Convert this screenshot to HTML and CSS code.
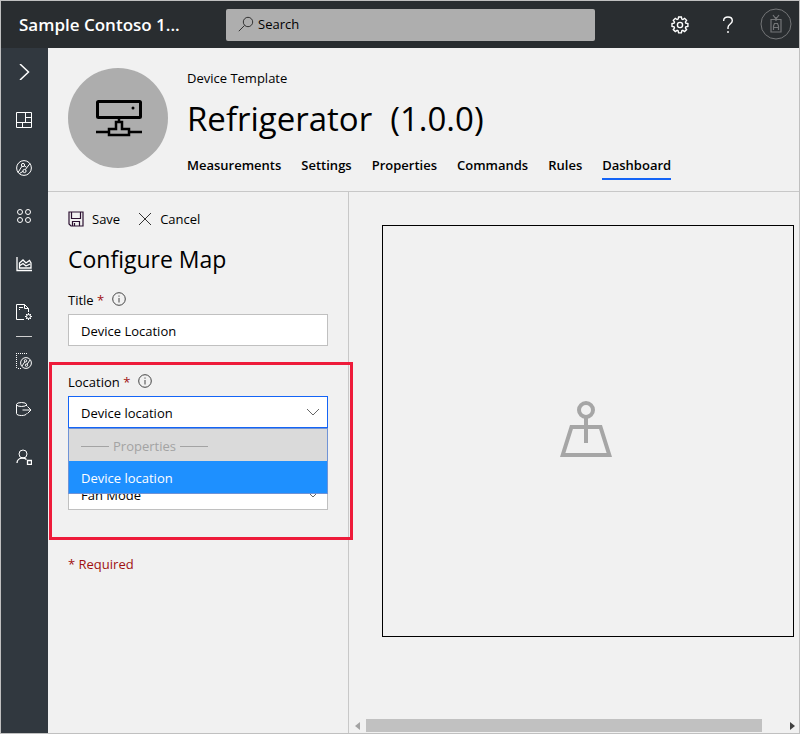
FILE: index.html
```html
<!DOCTYPE html>
<html lang="en">
<head>
<meta charset="utf-8">
<meta name="viewport" content="width=device-width, initial-scale=1">
<title>Refrigerator (1.0.0)</title>
<link rel="stylesheet" href="styles.css">
</head>
<body>
<header class="topbar">
  <div class="brand">Sample Contoso 1...</div>
  <label class="search">
    <svg width="16" height="16" viewBox="0 0 16 16" fill="none" stroke="#333"><circle cx="10" cy="6" r="4.7"/><path d="M6.6 9.4L.8 15.2"/></svg>
    <input type="search" placeholder="Search" aria-label="Search">
  </label>
  <div class="tools">
    <button class="tool" aria-label="Settings">
      <svg width="18" height="18" viewBox="0 0 18 18" fill="none" stroke="#fff" stroke-width="1.4"><path d="M7.6 1h2.8l.4 2.1 1 .4 1.8-1.2 2 2-1.2 1.8.4 1 2.1.5v2.8l-2.1.4-.4 1 1.2 1.8-2 2-1.8-1.2-1 .4-.4 2.1H7.6l-.5-2.1-1-.4-1.8 1.2-2-2 1.2-1.8-.4-1L1 10.400V7.600l2.100-.5.4-1-1.200-1.800 2-2 1.800 1.200 1-.4z"/><circle cx="9" cy="9" r="2.600"/></svg>
    </button>
    <button class="tool" aria-label="Help">
      <svg width="12" height="18" viewBox="0 0 12 18" fill="none" stroke="#fff" stroke-width="1.4"><path d="M1.700 5V4.200C1.700 2.200 3.400 1 5.900 1s4.400 1.400 4.400 3.700C10.300 8 6 8 6 11.500V13M6 15v2"/></svg>
    </button>
    <button class="avatar" aria-label="Account">
      <svg width="32" height="32" viewBox="0 0 32 32" fill="none" stroke="#747678"><circle cx="16" cy="16" r="15"/><path d="M11 11.500h10v12.500H11zM13 7l3 4 3-4M16 9v4" stroke-width="1.200"/><path d="M13.500 22v-4l1-2.500h3l1 2.500v4M13.500 19.500h5" stroke-width="1.200"/></svg>
    </button>
  </div>
</header>
<div class="shell">
  <nav class="rail" aria-label="Main">
    <button class="rail-item" aria-label="Expand"><svg width="16" height="16" viewBox="0 0 16 16"><path d="M4 0l8.500 8L4 16"/></svg></button>
    <a class="rail-item" href="#" aria-label="Dashboard"><svg width="16" height="16" viewBox="0 0 16 16"><path d="M.5.500h15v15H.500zM.500 10.500h15M9.500.500v10M9.500 5.500h6M6.500 10.500v5"/></svg></a>
    <a class="rail-item" href="#" aria-label="Explorer"><svg width="16" height="16" viewBox="0 0 16 16"><circle cx="8" cy="8" r="7.400"/><circle cx="7" cy="5" r="1.600"/><circle cx="8.500" cy="11" r="1.600"/><path d="M2 12.500L6 6.200M9.300 9.600L14 3.500M3.500 13.500l3.600-2.200M8.300 5.800l2.200 1.500"/></svg></a>
    <a class="rail-item" href="#" aria-label="Device sets"><svg width="16" height="16" viewBox="0 0 16 16"><circle cx="4" cy="4" r="2.500"/><circle cx="12" cy="4" r="2.500"/><circle cx="4" cy="12" r="2.500"/><circle cx="12" cy="12" r="2.500"/></svg></a>
    <a class="rail-item" href="#" aria-label="Analytics"><svg width="16" height="16" viewBox="0 0 16 16"><path d="M1 1v13.500h15M3.500 12V7L7 4l3 3 3.500-2.500L15 7v5zM4 9.500l3-2 3 2.500 4-2" stroke-width="1.300"/></svg></a>
    <a class="rail-item" href="#" aria-label="Jobs"><svg width="16" height="16" viewBox="0 0 16 16"><path d="M8 15.500H.500V.500h8l4 4V8M8.500.500v4h4M3 3.500h4M3 5.500h1" /><circle cx="12.500" cy="12.500" r="2"/><path d="M12.500 9v1.500M12.500 14.500V16M9 12.500h1.500M14.500 12.500H16M10 10l1 1M14 14l1 1M15 10l-1 1M11 14l-1 1"/></svg></a>
    <div class="rail-divider"></div>
    <a class="rail-item" href="#" aria-label="Device templates"><svg width="16" height="16" viewBox="0 0 16 16"><path d="M0 .500h12M.500 2v14M2 15.500h3" stroke-dasharray="1 1"/><circle cx="10" cy="10" r="5.400"/><circle cx="9.500" cy="7.800" r="1.200"/><circle cx="10.500" cy="12.200" r="1.200"/><path d="M6 13l3-4.400M14 7l-3 4.400"/></svg></a>
    <a class="rail-item" href="#" aria-label="Data export"><svg width="16" height="16" viewBox="0 0 16 16"><ellipse cx="5.500" cy="3.500" rx="5" ry="2"/><path d="M.500 3.500v9c0 2.700 10 2.700 10 0M10.500 3.500V5M6.500 9h8.500M11.500 5.500L15 9l-3.500 3.500"/></svg></a>
    <a class="rail-item" href="#" aria-label="Administration"><svg width="16" height="16" viewBox="0 0 16 16"><circle cx="7" cy="5" r="4"/><path d="M1 14c0-3 2.500-5 5.500-5 1.500 0 3 .5 4 1.500M11.500 11.500h4v4h-4z" stroke-width="1.300"/></svg></a>
  </nav>
  <main class="main">
    <section class="hero">
      <div class="hero-icon">
        <svg width="46" height="38" viewBox="0 0 46 38" fill="none" stroke="#000" stroke-width="3"><rect x="1.500" y="2.500" width="43" height="16" rx="1"/><path d="M0 33h13M33 33h13M23 19v4M20 30v-7h6v7h7v6H13v-6z" stroke-width="2.500"/><circle cx="37" cy="9" r="1.500" fill="#000" stroke="none"/></svg>
      </div>
      <div class="hero-text">
        <div class="kind">Device Template</div>
        <h1><span>Refrigerator</span> <span>(1.0.0)</span></h1>
        <nav class="tabs" aria-label="Template">
          <a href="#">Measurements</a>
          <a href="#">Settings</a>
          <a href="#">Properties</a>
          <a href="#">Commands</a>
          <a href="#">Rules</a>
          <a href="#" class="active" aria-current="page">Dashboard</a>
        </nav>
      </div>
    </section>
    <div class="workspace">
      <form class="panel">
        <div class="actions">
          <button type="button"><svg width="16" height="16" viewBox="0 0 16 16" fill="none" stroke="#2b1030" stroke-width="1.200"><path d="M1 1h14v14H3l-2-2zM3.500 1v6.500h9V1M4.500 15v-4.500h7V15M6.500 12v3"/></svg>Save</button>
          <button type="button"><svg width="14" height="14" viewBox="0 0 14 14" fill="none" stroke="#333"><path d="M1 1l12 12M13 1L1 13"/></svg>Cancel</button>
        </div>
        <h2>Configure Map</h2>
        <div class="field">
          <div class="label-row">
            <label for="title">Title <span class="star">*</span></label>
            <svg class="info" width="14" height="14" viewBox="0 0 14 14"><circle cx="7" cy="7" r="6.300"/><path d="M7 6v4.500M7 3.500v1.200"/></svg>
          </div>
          <input class="box" id="title" type="text" value="Device Location">
        </div>
        <div class="field highlight">
          <div class="label-row">
            <label for="location">Location <span class="star">*</span></label>
            <svg class="info" width="14" height="14" viewBox="0 0 14 14"><circle cx="7" cy="7" r="6.300"/><path d="M7 6v4.500M7 3.500v1.200"/></svg>
          </div>
          <div class="picker">
            <select class="box open" id="location"><option>Device location</option></select>
            <svg class="chevron" width="12" height="8" viewBox="0 0 12 8"><path d="M0 1l6 6 6-6"/></svg>
            <ul class="menu">
              <li class="group"><span class="dash"></span>Properties<span class="dash"></span></li>
              <li class="chosen">Device location</li>
            </ul>
          </div>
          <div class="picker state">
            <select class="box" aria-label="State"><option>Fan Mode</option></select>
            <svg class="chevron" width="12" height="8" viewBox="0 0 12 8"><path d="M0 1l6 6 6-6"/></svg>
          </div>
        </div>
        <p class="required">* Required</p>
      </form>
      <section class="canvas">
        <div class="tile">
          <svg width="52" height="58" viewBox="0 0 52 58" fill="none" stroke="#a6a6a6" stroke-width="4"><path d="M11.500 27h29L49.300 55H2.700zM26 17v26"/><circle cx="26" cy="10" r="7"/></svg>
        </div>
        <div class="scrollbar">
          <svg width="5" height="8" viewBox="0 0 5 8"><path d="M5 0v8L0 4z" fill="#a3a3a3"/></svg>
          <div class="thumb"></div>
          <svg width="5" height="8" viewBox="0 0 5 8"><path d="M0 0v8l5-4z" fill="#404040"/></svg>
        </div>
      </section>
    </div>
  </main>
</div>
</body>
</html>
```
FILE: styles.css
```css
* { box-sizing: border-box; }

body {
  margin: 0;
  min-height: 100vh;
  display: flex;
  flex-direction: column;
  border: 1px solid #c0c0c0;
  background: #f1f1f1;
  color: #000;
  font: 13px/20px "Open Sans", "Noto Sans", sans-serif;
}

button, input, select { font: inherit; color: inherit; }
button { border: 0; padding: 0; background: none; }
a { color: inherit; text-decoration: none; }
svg { display: block; flex: none; }

.topbar {
  height: 47px;
  flex: none;
  display: grid;
  grid-template-columns: 207px minmax(0, 369px) 1fr;
  gap: 18px;
  align-items: center;
  padding-right: 7px;
  background: #292d30;
}
.brand {
  padding-left: 18px;
  color: #fff;
  font-size: 17px;
  line-height: 24px;
  font-weight: 600;
  white-space: nowrap;
}
.search {
  height: 32px;
  display: flex;
  align-items: center;
  gap: 4px;
  padding: 0 12px 2px;
  border-radius: 2px;
  background: #aeaeae;
}
.search input { flex: 1; min-width: 0; border: 0; padding: 0; background: none; outline: 0; }
.search input::placeholder { color: #000; opacity: 1; }
.tools { display: flex; justify-content: flex-end; align-items: center; }
.tool { width: 48px; height: 46px; display: grid; place-items: center; }
.avatar { margin-left: 8px; padding-bottom: 2px; }

.shell { flex: 1; display: flex; }
.rail { width: 47px; flex: none; padding-right: 1px; background: #31383f; }
.rail-item { width: 100%; height: 48px; display: grid; place-items: center; }
.rail svg { fill: none; stroke: #fff; stroke-width: 1; }
.rail-item:first-child svg { stroke-width: 1.5; }
.rail-divider { width: 16px; height: 1px; margin: 0 auto; background: #d0d0d0; }

.main { flex: 1; min-width: 0; display: flex; flex-direction: column; }
.hero {
  display: flex;
  gap: 19px;
  padding: 20px 20px 11px;
  border-bottom: 1px solid #c8c8c8;
}
.hero-icon {
  width: 100px;
  height: 100px;
  flex: none;
  display: grid;
  place-items: center;
  padding-left: 1px;
  border-radius: 50%;
  background: #adadad;
}
h1, h2 { margin: 0; font-weight: 400; }
h1 {
  display: flex;
  gap: 18px;
  margin-top: 6px;
  font-size: 33px;
  line-height: 50px;
}
.tabs { display: flex; gap: 20px; margin-top: 9px; font-weight: 600; }
.tabs a { padding-bottom: 1px; line-height: 24px; border-bottom: 2px solid transparent; }
.tabs .active { border-color: #1464f6; }

.workspace { flex: 1; display: flex; }
.panel { width: 301px; flex: none; padding: 17px 20px; border-right: 1px solid #c8c8c8; }
.actions { display: flex; gap: 18px; }
.actions button { display: flex; align-items: center; gap: 8px; }
h2 { margin: 13px 0 12px; font-size: 23px; line-height: 34px; }
.field { position: relative; }
.label-row { display: flex; align-items: center; gap: 8px; height: 26px; padding-bottom: 2px; }
.star, .required { color: #a01010; }
.info { margin-bottom: 2px; fill: none; stroke: #444; }
.box {
  display: block;
  width: 100%;
  height: 32px;
  padding: 2px 12px 0;
  border: 1px solid #c0c0c0;
  border-radius: 0;
  background: #fff;
  appearance: none;
  outline: 0;
}
.box.open { border-color: #1464f6; }
.highlight { margin-top: 24px; }
.highlight::after {
  content: "";
  position: absolute;
  inset: -8px -25px -30px -19px;
  border: 3px solid #ee1b3a;
  pointer-events: none;
}
.picker { position: relative; }
.picker.state { margin-top: 50px; }
.picker:not(.state) { z-index: 1; }
.chevron { position: absolute; right: 9px; top: 12px; fill: none; stroke: #666; }
.menu {
  position: absolute;
  left: 0;
  right: 0;
  top: 100%;
  margin: 0;
  padding: 0;
  list-style: none;
  border: 1px solid #6f93d6;
}
.menu li { height: 32px; padding: 2px 12px 0; display: flex; align-items: center; gap: 4px; }
.group { background: #dadada; color: #a3a3a3; }
.dash { width: 28px; height: 1px; background: #a3a3a3; }
.chosen { background: #1e90ff; color: #fff; }
.required { margin: 44px 0 0; }

.canvas { flex: 1; min-width: 0; display: flex; flex-direction: column; }
.tile {
  aspect-ratio: 1;
  margin: 33px 5px 0 33px;
  padding: 0 4px 4px 0;
  display: grid;
  place-items: center;
  border: 1px solid #000;
}
.scrollbar { height: 15px; margin-top: auto; display: flex; align-items: center; gap: 6px; padding: 0 4px 0 6px; }
.thumb { width: 90%; height: 13px; margin-right: auto; background: #c1c1c1; }
```
